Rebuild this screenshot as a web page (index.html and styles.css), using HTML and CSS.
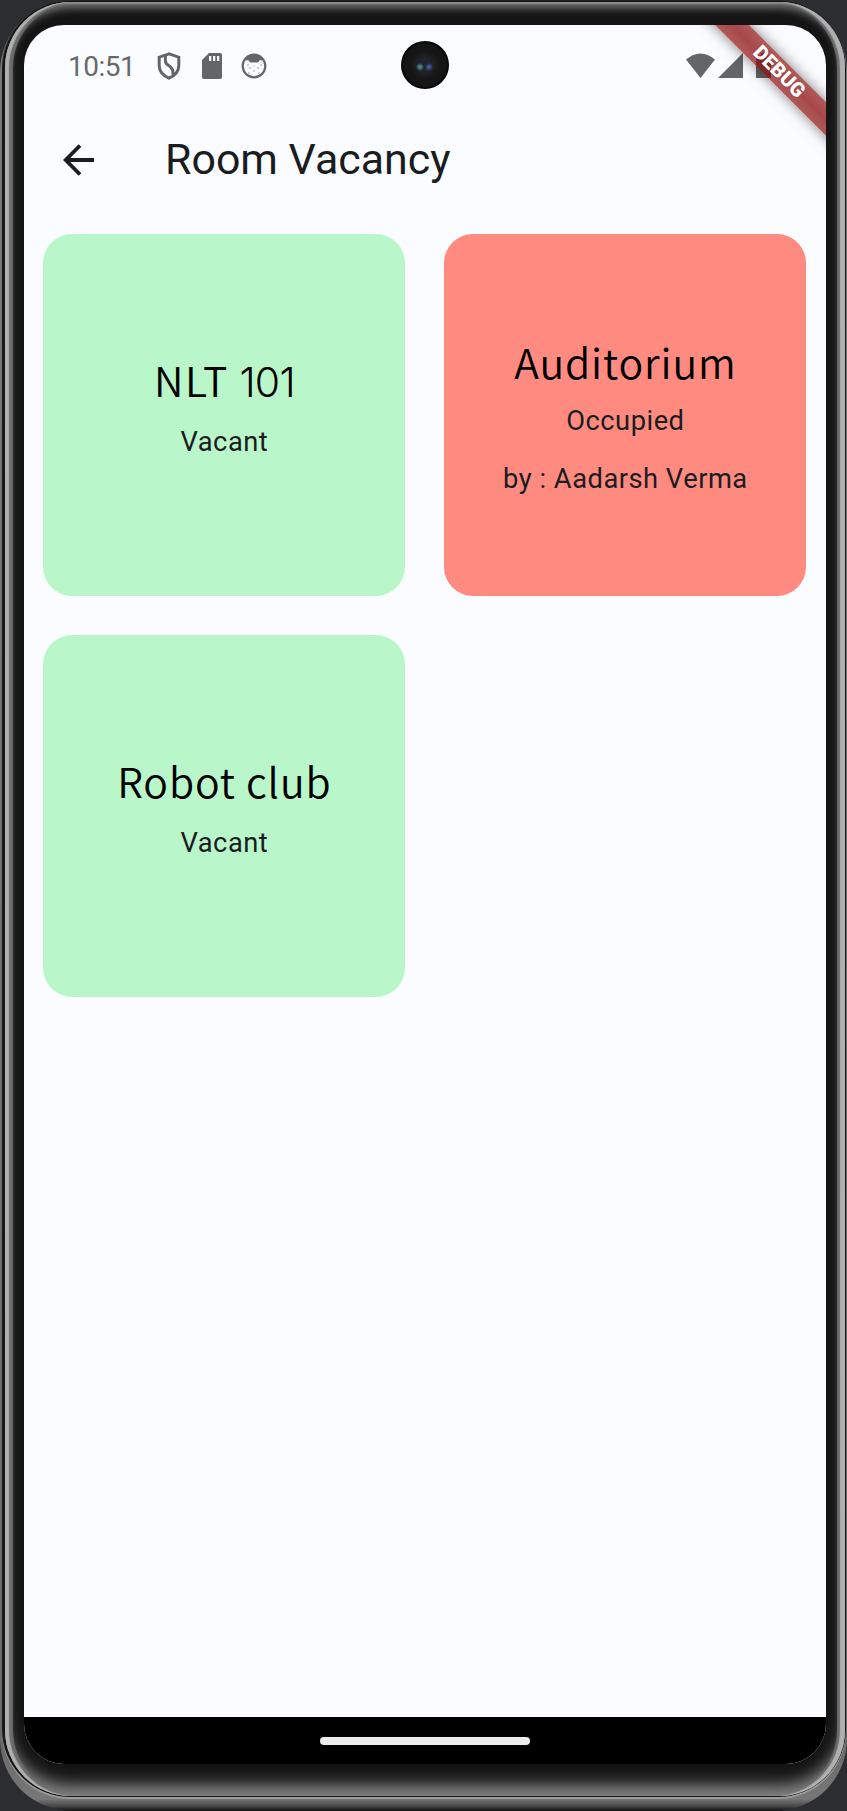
FILE: index.html
```html
<!DOCTYPE html>
<html lang="en">
<head>
<meta charset="utf-8">
<title>Room Vacancy</title>
<link rel="stylesheet" href="styles.css">
</head>
<body>
<div class="rim">
<div class="groove">
<div class="metal">
<div class="bezel">
<main class="screen">
  <header class="status">
    <span class="time">10:51</span>
    <svg class="shield" width="24" height="28" viewBox="0 0 24 28" fill="none" stroke="#646567" stroke-width="3"><path d="M12 1.800 2.200 5.200v8.300c0 5.800 4.200 10.200 9.800 12.700 5.600-2.500 9.800-6.900 9.800-12.700V5.200Z"/><path d="M8.500 3.500c-.8 10 1.500 8 5.500 12 2 2 2.500 4 2 7.500"/></svg>
    <svg class="sd" width="20" height="26" viewBox="0 0 20 26"><path fill="#646567" d="M7 0h11q2 0 2 2v22q0 2-2 2H2q-2 0-2-2V7Z"/><path fill="#fbfcff" d="M7 3h2.300v5H7zM11 3h2.300v5H11zM15 3h2.300v5H15z"/></svg>
    <svg class="face" width="26" height="26" viewBox="0 0 26 26"><circle cx="13" cy="13" r="11.300" fill="#fbfcff" stroke="#646567" stroke-width="2.200"/><path fill="#646567" d="M4 6Q13-2 22 6l-1.500 1.500-1.500-.5-2 2.500H9.500L7 7l-1.500.5Z"/><g fill="#858689"><circle cx="7" cy="12" r=".7"/><circle cx="9" cy="15" r=".8"/><circle cx="17" cy="15" r=".8"/><circle cx="20" cy="12" r=".7"/><circle cx="13" cy="18" r=".7"/><circle cx="8" cy="20" r=".7"/><circle cx="18" cy="20" r=".7"/><circle cx="13" cy="13" r=".5"/></g></svg>
    <svg class="signals" width="90" height="26" viewBox="0 0 90 26" fill="#646567"><path d="M0 6.500Q14.500-5.500 29 6.500L14.500 25Z"/><path d="M57 0v25H32Z"/><path d="M75 2.500V0h7v2.500h3V25H70V2.500Z"/></svg>
  </header>
  <div class="camera"></div>
  <div class="debug">DEBUG</div>
  <div class="appbar">
    <svg width="32" height="32" viewBox="0 0 32 32" fill="none" stroke="#1a1c20" stroke-width="3.800"><path d="M31 16H3M17 1.500 2.700 16 17 30.500"/></svg>
    <h1>Room Vacancy</h1>
  </div>
  <section class="rooms">
    <article class="room vacant"><h2 class="lettered">NLT <span class="number">101</span></h2><p>Vacant</p></article>
    <article class="room occupied"><h2>Auditorium</h2><p>Occupied</p><p class="by">by : Aadarsh Verma</p></article>
    <article class="room vacant"><h2>Robot club</h2><p>Vacant</p></article>
  </section>
  <footer class="nav"><div class="handle"></div></footer>
</main>
</div>
</div>
</div>
</div>
</body>
</html>
```
FILE: styles.css
```css
* { box-sizing: border-box; }
body { margin: 0; background: #2b2d31; font-family: Roboto, sans-serif; overflow: hidden; }
h1, h2, p { margin: 0; font-weight: 400; white-space: nowrap; }
.rim { height: 1811px; padding: 1px 1px 14px 2px; border-radius: 72px; background: linear-gradient(#222, #777 60px, #6a6a6a 1750px, #777 1799px, #484848 1806px, #111 1811px); }
.groove { height: 1796px; padding: 1px 1px 1px 3px; border-radius: 68px; background: #181818; box-shadow: 0 2px 0 #9c9c9c; }
.metal { height: 1794px; border-radius: 66px; background: #141414; box-shadow: inset 4px 0 1px #b0b0b0, inset -5px 0 1px #b0b0b0, inset 8px 0 1px #6c6c6c, inset -8px 0 1px #6c6c6c, inset 0 2px 1px #8c8c8c, inset 0 6px 9px #777, inset 0 -11px 16px #868686; }
.bezel { height: 1794px; padding: 23px 16px 32px 19px; }
.screen { position: relative; width: 802px; height: 1739px; display: flex; flex-direction: column; overflow: hidden; border-radius: 40px; background: #fbfcff; }
.status { display: flex; align-items: flex-start; height: 96px; padding: 27px 50px 0 44px; color: #68696b; }
.time { width: 66px; font-size: 28px; line-height: 29px; letter-spacing: -.5px; }
.shield { margin-left: 23px; }
.sd { margin: 1px 0 0 21px; }
.face { margin: 1px 0 0 19px; }
.signals { margin: 1px 0 0 auto; }
.camera { position: absolute; left: 377px; top: 16px; width: 48px; height: 48px; border-radius: 50%; background: radial-gradient(circle at 19px 26px, #4b8590 0 1px, transparent 4px), radial-gradient(circle at 28px 26px, #4857a0 0 1px, transparent 4px), radial-gradient(circle, #20252b 0 6px, #161616 14px, #141414 21px, #000 24px); }
.debug { position: absolute; left: 645px; top: 35px; width: 220px; height: 23.500px; transform: rotate(45deg); background: linear-gradient(rgba(142, 10, 10, .68), rgba(132, 8, 8, .73) 50%, rgba(142, 10, 10, .68)); box-shadow: 0 0 14px rgba(0, 0, 0, .5); color: #fff; font-size: 20px; line-height: 23px; font-weight: 900; text-align: center; }
.appbar { display: flex; align-items: center; height: 78px; padding-left: 39px; gap: 70px; }
h1 { margin-top: -2px; color: #1a1c20; font-size: 42.900px; line-height: 52px; }
.rooms { flex: 1; display: grid; grid-template-columns: 362px 362px; grid-auto-rows: 362px; gap: 39px; padding: 35px 19.400px; }
.room { display: flex; flex-direction: column; align-items: center; justify-content: center; border-radius: 29px; color: #1a1c20; }
.vacant { padding-bottom: 19px; background: #b9f6ca; }
.occupied { background: #ff8a80; }
h2 { height: 60px; margin-bottom: 11px; color: #000; font-family: "Noto Sans CJK JP", sans-serif; font-size: 41px; font-weight: 350; line-height: 60px; letter-spacing: .9px; }
.vacant h2 { margin-bottom: 14px; }
.lettered { letter-spacing: 1.500px; }
.number { font-family: Inter, sans-serif; font-weight: 350; line-height: 1; letter-spacing: -.8px; }
.room p { font-size: 27.300px; line-height: 39px; letter-spacing: .5px; }
.room .by { margin-top: 19px; }
.nav { display: flex; justify-content: center; height: 47px; padding-top: 20px; background: #000; }
.handle { width: 210px; height: 8px; border-radius: 4px; background: #ececec; }
```
